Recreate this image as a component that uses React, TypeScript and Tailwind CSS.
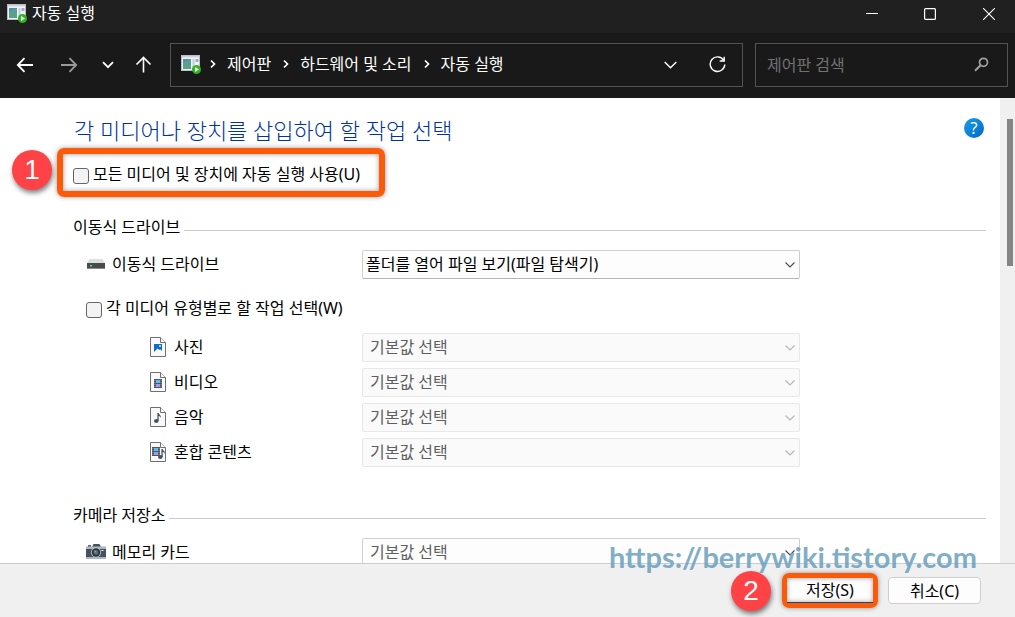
import { ReactNode, useState } from 'react';
import clsx from 'clsx';

type MediaRow = {
  id: string;
  label: string;
  icon: ReactNode;
};

const AutoPlayIcon = () => (
  <svg width="20" height="19" viewBox="0 0 20 19" className="shrink-0" aria-hidden="true">
    <rect x="0.5" y="0.5" width="18" height="15" fill="#f1f3f6" stroke="#b9bec6" />
    <rect x="1" y="1" width="17" height="1.5" fill="#cfd3da" />
    <rect x="2" y="4" width="8" height="10" fill="#4f8fb5" />
    <path d="M2 14V8l8-4v10z" fill="#5ba08c" />
    <rect x="11.5" y="4" width="2" height="10" fill="#c5ccda" />
    <rect x="14.5" y="4" width="3" height="3" fill="#9cabc7" />
    <circle cx="15.5" cy="14.5" r="4.5" fill="#2fb41d" />
    <path d="M14 12l4 2.5-4 2.5z" fill="#fff" />
  </svg>
);

const Chevron = ({ className }: { className?: string }) => (
  <svg width="12" height="8" viewBox="0 0 12 8" fill="none" stroke="currentColor" className={className} aria-hidden="true">
    <path d="M1.5 1.5L6 6l4.500-4.500" strokeWidth="1.1" />
  </svg>
);

const Crumb = () => (
  <svg width="6" height="10" viewBox="0 0 6 10" fill="none" stroke="#fff" strokeWidth="1.7" className="shrink-0" aria-hidden="true">
    <path d="M1 1.5L4.5 5 1 8.5" />
  </svg>
);

const FilePage = ({ children }: { children: ReactNode }) => (
  <svg width="16" height="20" viewBox="0 0 16 20" className="shrink-0" aria-hidden="true">
    <path d="M.5.5h10l5 5v14H.5z" fill="#f9f9f9" stroke="#707070" />
    <path d="M10.5.5v5h5" fill="#fff" stroke="#707070" />
    {children}
  </svg>
);

const Film = ({ x, y }: { x: number; y: number }) => (
  <g transform={`translate(${x} ${y})`}>
    <rect width="8" height="9" fill="#4c5660" />
    <rect x="2" y="1" width="4" height="3" fill="#55c1ee" />
    <rect x="2" y="5" width="4" height="3" fill="#a995ea" />
    <path d="M.9 1v8M7.1 1v8" stroke="#dfe3e7" strokeWidth=".5" strokeDasharray="1 1" />
  </g>
);

const Note = ({ x, y }: { x: number; y: number }) => (
  <g transform={`translate(${x} ${y})`} fill="#46525c">
    <ellipse cx="2.3" cy="8" rx="2.3" ry="1.9" />
    <path d="M3.4 0h1.3c.2 1.8 2.6 2 2.3 5-.5-1.3-1.2-1.8-2.3-2v5H3.4z" />
  </g>
);

const DriveIcon = () => (
  <svg width="18" height="10" viewBox="0 0 18 10" className="shrink-0" aria-hidden="true">
    <path d="M2.5 0h13L18 4H0z" fill="#dcdfe2" />
    <rect y="4" width="18" height="6" fill="#4a4a4a" />
    <rect y="9" width="18" height="1" fill="#8b8b8b" />
    <rect x="3" y="6" width="2" height="1.5" fill="#4bea5a" />
  </svg>
);

const CameraIcon = () => (
  <svg width="20" height="15" viewBox="0 0 20 15" className="shrink-0" aria-hidden="true">
    <path d="M6 3l1.5-3h6L15 3z" fill="#48535d" />
    <rect x="2" y="1" width="3" height="2" fill="#59646e" />
    <rect y="2.5" width="20" height="12.5" fill="#aab6c2" />
    <rect y="5" width="20" height="8" fill="#46515c" />
    <circle cx="10" cy="8.5" r="5" fill="#c1cad2" />
    <circle cx="10" cy="8.5" r="4.2" fill="#28323b" />
    <circle cx="10" cy="8.5" r="2.4" fill="#5c6b79" />
    <circle cx="9" cy="7.5" r="1" fill="#8c9aa8" />
    <rect x="15.5" y="6" width="2" height="1" fill="#fff" />
  </svg>
);

const MEDIA_ROWS: MediaRow[] = [
  {
    id: 'photo',
    label: '사진',
    icon: (
      <FilePage>
        <rect x="4" y="7" width="8" height="8" fill="#0f6cc9" />
        <path d="M4 15l3.5-3.500 1.700 1.500 1-.8L12 14v1z" fill="#fff" />
        <circle cx="10" cy="9" r=".9" fill="#fff" />
      </FilePage>
    ),
  },
  { id: 'video', label: '비디오', icon: <FilePage><Film x={4} y={7} /></FilePage> },
  { id: 'music', label: '음악', icon: <FilePage><Note x={4} y={6} /></FilePage> },
  { id: 'mixed', label: '혼합 콘텐츠', icon: <FilePage><Film x={2} y={5} /><Note x={8} y={7} /></FilePage> },
];

const Checkbox = ({ id, label }: { id: string; label: string }) => {
  const [checked, setChecked] = useState(false);
  return (
    <label htmlFor={id} className="flex items-center gap-1">
      <input
        id={id}
        type="checkbox"
        checked={checked}
        onChange={(event) => setChecked(event.target.checked)}
        className="mt-1 size-4 shrink-0 appearance-none rounded-[3px] border border-[#666] bg-[#f3f3f3] checked:bg-[#0067c0]"
      />
      <span className="whitespace-nowrap">{label}</span>
    </label>
  );
};

type SelectRowProps = {
  id: string;
  label: string;
  icon: ReactNode;
  value?: string;
  indent?: boolean;
  disabled?: boolean;
};

const SelectRow = ({ id, label, icon, value = '기본값 선택', indent, disabled }: SelectRowProps) => (
  <div className="flex items-center">
    <label
      htmlFor={id}
      className={clsx('flex w-[289px] shrink-0 items-center pb-[2px]', indent ? 'gap-2 pl-[77px]' : 'gap-[6px] pl-[13px]')}
    >
      <span className={clsx('flex shrink-0 justify-center', indent ? 'w-4' : 'w-5')}>{icon}</span>
      {label}
    </label>
    <div className="relative max-w-[438px] flex-1">
      <select
        id={id}
        disabled={disabled}
        className={clsx(
          'block h-[29px] w-full appearance-none rounded-[2px] border pr-7 pb-[2px] opacity-100',
          value === '기본값 선택' ? 'pl-[7px] text-[#5f5f5f]' : 'pl-[3px] text-black',
          disabled ? 'border-[#e8e8e8] bg-[#fafafa]' : 'border-[#d0d0d0] border-b-[#b5b5b5] bg-[#fdfdfd]'
        )}
      >
        <option>{value}</option>
      </select>
      <Chevron
        className={clsx(
          'pointer-events-none absolute top-1/2 right-1 -translate-y-1/2',
          disabled ? 'text-[#b5b5b5]' : 'text-[#4a4a4a]'
        )}
      />
    </div>
  </div>
);

const SectionTitle = ({ children }: { children: ReactNode }) => (
  <div className="flex h-6 items-center gap-1">
    <h2>{children}</h2>
    <span className="mt-[6px] h-px flex-1 bg-[#ccc]" />
  </div>
);

const Step = ({ children }: { children: ReactNode }) => (
  <span className="flex size-10 shrink-0 items-center justify-center rounded-full bg-[#ff4245] font-['Liberation_Sans',sans-serif] text-[28px] font-normal text-white shadow-[1px_3px_5px_rgba(0,0,0,0.5)]">
    {children}
  </span>
);

const App = () => (
  <div className="flex h-screen flex-col overflow-hidden bg-white font-['Noto_Sans','Noto_Sans_CJK_KR',sans-serif] text-base leading-6 text-black">
    <header className="shrink-0 bg-[#191919] text-white">
      <div className="flex h-[33px] items-start justify-between bg-[#202020] pl-[7px]">
        <div className="flex items-center gap-[5px] pt-px">
          <AutoPlayIcon />
          <h1>자동 실행</h1>
        </div>
        <div className="flex">
          <button type="button" aria-label="최소화" className="flex h-7 w-[58px] items-center justify-center">
            <svg width="12" height="12" viewBox="0 0 12 12" stroke="#fff"><path d="M0 5.500h12" /></svg>
          </button>
          <button type="button" aria-label="최대화" className="flex h-7 w-[58px] items-center justify-center">
            <svg width="12" height="12" viewBox="0 0 12 12" fill="none" stroke="#fff" strokeWidth="1.2"><rect x=".6" y=".6" width="10.800" height="10.800" rx="1" /></svg>
          </button>
          <button type="button" aria-label="닫기" className="flex h-7 w-[56px] items-center justify-center pl-1">
            <svg width="12" height="12" viewBox="0 0 12 12" stroke="#fff" strokeWidth="1.1"><path d="M0 0l12 12M12 0L0 12" /></svg>
          </button>
        </div>
      </div>
      <nav className="flex h-[65px] items-center pr-[7px] pb-[2px] pl-4">
        <div className="flex w-[154px] shrink-0 items-center">
          <button type="button" aria-label="뒤로" className="mr-[26px]">
            <svg width="18" height="16" viewBox="0 0 18 16" fill="none" stroke="#fff" strokeWidth="1.8"><path d="M17 8H2M8.500 1.200L1.800 8l6.700 6.800" /></svg>
          </button>
          <button type="button" aria-label="앞으로" className="mr-6">
            <svg width="18" height="16" viewBox="0 0 18 16" fill="none" stroke="#9a9a9a" strokeWidth="1.8"><path d="M1 8h15M9.500 1.200L16.200 8l-6.700 6.800" /></svg>
          </button>
          <button type="button" aria-label="최근 위치" className="mr-[21px]">
            <svg width="12" height="8" viewBox="0 0 12 8" fill="none" stroke="#fff" strokeWidth="1.8"><path d="M1 1.200l5 5 5-5" /></svg>
          </button>
          <button type="button" aria-label="위로">
            <svg width="17" height="17" viewBox="0 0 16 17" fill="none" stroke="#fff" strokeWidth="1.6"><path d="M8 16.500V1.800M1 8.500l7-7 7 7" /></svg>
          </button>
        </div>
        <div className="flex h-11 min-w-0 flex-1 items-center border border-[#535353] pr-4 pl-[10px]">
          <AutoPlayIcon />
          <ol className="ml-[9px] flex items-center gap-3 pb-[2px] whitespace-nowrap">
            <li className="flex items-center gap-[11px]"><Crumb /><a href="#control-panel">제어판</a></li>
            <li className="flex items-center gap-[11px]"><Crumb /><a href="#hardware">하드웨어 및 소리</a></li>
            <li className="flex items-center gap-[11px]"><Crumb /><a href="#autoplay">자동 실행</a></li>
          </ol>
          <button type="button" aria-label="이전 위치" className="mr-8 ml-auto">
            <svg width="13" height="8" viewBox="0 0 13 8" fill="none" stroke="#fff" strokeWidth="1.4"><path d="M.7 1l5.800 5.800L12.300 1" /></svg>
          </button>
          <button type="button" aria-label="새로 고침">
            <svg width="17" height="17" viewBox="0 0 17 17" fill="none" stroke="#fff" strokeWidth="1.4"><path d="M14.700 4.300A7.300 7.300 0 1 0 15.800 8.500M15.200 .7v4.300h-4.500" /></svg>
          </button>
        </div>
        <div className="ml-3 flex h-11 w-[253px] shrink-0 items-center border border-[#535353] pr-[18px] pl-[11px]">
          <input
            type="search"
            aria-label="제어판 검색"
            placeholder="제어판 검색"
            className="min-w-0 flex-1 bg-transparent outline-none placeholder:text-[#717171]"
          />
          <svg width="15" height="15" viewBox="0 0 15 15" fill="none" stroke="#a0a0a0" aria-hidden="true">
            <circle cx="9.500" cy="5.300" r="4" strokeWidth="1.7" />
            <path d="M6.600 8.200L1 13.800" strokeWidth="2" />
          </svg>
        </div>
      </nav>
    </header>

    <div className="flex min-h-0 flex-1">
      <main className="min-w-0 flex-1 overflow-y-auto [scrollbar-width:none]">
        <div className="flex items-start justify-between pt-[17px] pr-4 pl-[74px]">
          <h2 className="pb-[2px] text-[22px] leading-[31px] font-light text-[#003399]">각 미디어나 장치를 삽입하여 할 작업 선택</h2>
          <button
            type="button"
            aria-label="도움말"
            className="mt-[3px] flex size-5 items-center justify-center rounded-full bg-linear-to-br from-[#1a9ee6] to-[#0668c9] text-base text-white"
          >
            ?
          </button>
        </div>
        <div className="flex items-start gap-[5px] pl-3">
          <div className="pt-[2px]">
            <Step>1</Step>
          </div>
          <div className="flex h-[49px] w-[328px] items-center rounded-[7px] border-[6px] border-[#fb5a08] pt-[2px] pl-[10px] shadow-[0_0_5px_rgba(0,0,0,0.4),inset_0_0_5px_rgba(0,0,0,0.4)]">
            <Checkbox id="use-autoplay" label="모든 미디어 및 장치에 자동 실행 사용(U)" />
          </div>
        </div>

        <div className="pr-[14px] pl-[73px]">
          <section className="pt-[18px]">
            <SectionTitle>이동식 드라이브</SectionTitle>
            <div className="pt-[11px]">
              <SelectRow id="removable" label="이동식 드라이브" icon={<DriveIcon />} value="폴더를 열어 파일 보기(파일 탐색기)" />
            </div>
            <div className="pt-[17px] pb-[13px] pl-[13px]">
              <Checkbox id="per-media" label="각 미디어 유형별로 할 작업 선택(W)" />
            </div>
            <div className="flex flex-col gap-[6px]">
              {MEDIA_ROWS.map((row) => (
                <SelectRow key={row.id} id={row.id} label={row.label} icon={row.icon} indent disabled />
              ))}
            </div>
          </section>
          <section className="pt-9">
            <SectionTitle>카메라 저장소</SectionTitle>
            <div className="pt-[11px]">
              <SelectRow id="memory-card" label="메모리 카드" icon={<CameraIcon />} />
            </div>
          </section>
        </div>
      </main>
      <div className="flex w-[15px] shrink-0 justify-end bg-[#f0f0f0] pt-[21px] pr-[2px]">
        <div className="h-[147px] w-[6px] bg-[#858585]" />
      </div>
    </div>

    <footer className="relative flex h-[54px] shrink-0 items-center justify-end border-t border-[#ccc] bg-[#f0f0f0] pr-[34px]">
      <Step>2</Step>
      <div className="mr-[10px] ml-[11px] rounded-[7px] border-[5px] border-[#fb5a08] shadow-[0_0_5px_rgba(0,0,0,0.4)]">
        <button
          type="button"
          className="block h-[25px] w-[86px] border-b border-[#1b4a7a] bg-[#fdfdfd] leading-[22px] shadow-[inset_0_0_5px_rgba(0,0,0,0.35)]"
        >
          저장(S)
        </button>
      </div>
      <button type="button" className="h-[27px] w-[93px] rounded-[4px] border border-[#d0d0d0] bg-[#fdfdfd] leading-[22px]">
        취소(C)
      </button>
      <p className="pointer-events-none absolute right-[38px] bottom-[40px] font-['Lato',sans-serif] text-[29px] leading-10 font-bold text-[#6fa3bf]/90">
        https://berrywiki.tistory.com
      </p>
    </footer>
  </div>
);

export default App;
